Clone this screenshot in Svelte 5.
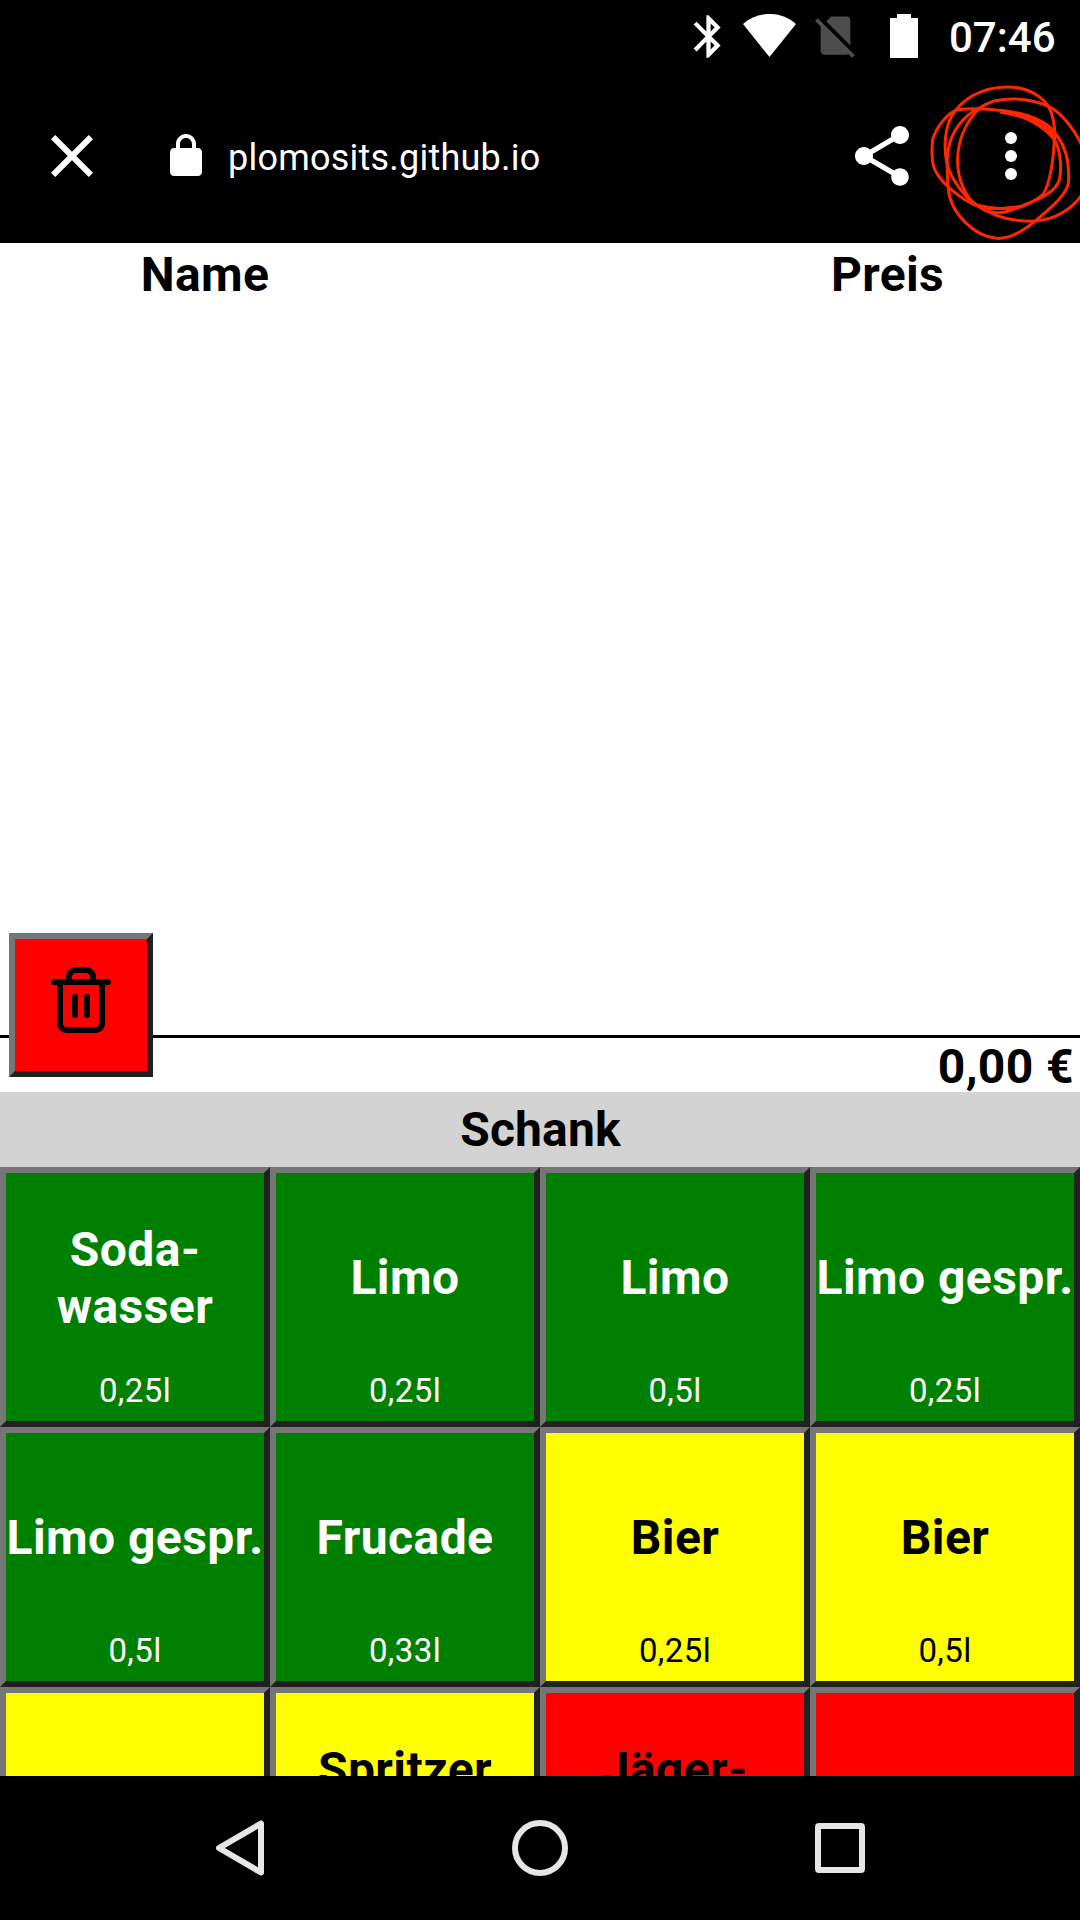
<script>
  const drinks = [
    { name: 'Soda-\nwasser', size: '0,25l', tone: 'green' },
    { name: 'Limo', size: '0,25l', tone: 'green' },
    { name: 'Limo', size: '0,5l', tone: 'green' },
    { name: 'Limo gespr.', size: '0,25l', tone: 'green' },
    { name: 'Limo gespr.', size: '0,5l', tone: 'green' },
    { name: 'Frucade', size: '0,33l', tone: 'green' },
    { name: 'Bier', size: '0,25l', tone: 'yellow' },
    { name: 'Bier', size: '0,5l', tone: 'yellow' },
    { name: '', size: '', tone: 'yellow' },
    { name: 'Spritzer\n\u00a0', size: '', tone: 'yellow' },
    { name: 'Jäger-\n\u00a0', size: '', tone: 'red' },
    { name: '', size: '', tone: 'red' }
  ];
</script>

<div class="screen">
  <header>
    <div class="status">
      <svg class="bt" viewBox="0 0 24 24"><path d="M17.71 7.71L12 2h-1v7.59L6.41 5 5 6.41 10.59 12 5 17.59 6.41 19 11 14.41V22h1l5.71-5.71-4.3-4.29 4.3-4.29zM13 5.83l1.88 1.88L13 9.59V5.83zm1.88 10.46L13 18.17v-3.76l1.88 1.88z" /></svg>
      <svg class="wifi" viewBox="0 0 53 43"><path d="M0 10C15-3.4 38-3.4 53 10L26.5 43z" /></svg>
      <svg class="sim" viewBox="0 0 24 24"><path d="M18.99 5c0-1.1-.6-2-1.7-2H10L7.66 5.34 19 16.68 18.99 5zM3.65 3.88L2.38 5.15 5 7.77V19c0 1.1.9 2 2 2h10.01c.35 0 .67-.1.96-.26l1.88 1.88 1.27-1.27L3.65 3.88z" /></svg>
      <svg class="battery" viewBox="0 0 28 44"><path d="M0 4h7V0h14v4h7v40H0z" /></svg>
      <span class="clock">07:46</span>
    </div>
    <div class="toolbar">
      <svg class="close" viewBox="0 0 24 24"><path d="M19 6.41L17.59 5 12 10.59 6.41 5 5 6.41 10.59 12 5 17.59 6.41 19 12 13.41 17.59 19 19 17.59 13.41 12z" /></svg>
      <svg class="lock" viewBox="0 0 24 24"><path d="M18 8h-1V6c0-2.76-2.24-5-5-5S7 3.24 7 6v2H6c-1.1 0-2 .9-2 2v10c0 1.1.9 2 2 2h12c1.1 0 2-.9 2-2V10c0-1.1-.9-2-2-2zM9 8V6c0-1.66 1.34-3 3-3s3 1.34 3 3v2H9z" /></svg>
      <span class="url">plomosits.github.io</span>
      <svg class="share" viewBox="0 0 24 24"><path d="M18 16.08c-.76 0-1.44.3-1.96.77L8.91 12.7c.05-.23.09-.46.09-.7s-.04-.47-.09-.7l7.05-4.11c.54.5 1.25.81 2.04.81 1.66 0 3-1.34 3-3s-1.34-3-3-3-3 1.34-3 3c0 .24.04.47.09.7L8.04 9.81C7.5 9.31 6.79 9 6 9c-1.66 0-3 1.34-3 3s1.34 3 3 3c.79 0 1.5-.31 2.04-.81l7.12 4.16c-.05.21-.08.43-.08.65 0 1.61 1.31 2.92 2.92 2.92s2.92-1.31 2.92-2.92-1.31-2.92-2.92-2.92z" /></svg>
      <svg class="more" viewBox="0 0 24 24"><circle cx="12" cy="6" r="2" /><circle cx="12" cy="12" r="2" /><circle cx="12" cy="18" r="2" /></svg>
    </div>
    <svg class="scribble" viewBox="0 0 465 495">
      <path d="M228 97C300 105 360 140 390 182C408 215 410 270 403 300C392 340 330 362 290 378C240 392 200 385 150 375C110 358 50 312 30 270C18 245 20 210 23 178C35 140 65 102 95 90C150 82 230 88 290 102C340 114 375 135 395 165C425 205 434 260 430 310C424 346 375 385 330 424C290 456 250 478 215 475C150 470 75 400 70 325C66 290 66 262 67 235C70 165 105 120 150 90" />
      <path d="M165 84C120 125 95 190 98 250C100 300 120 350 155 375C205 410 260 425 325 424C390 420 440 388 470 345M470 195C445 145 410 100 372 80C320 56 260 53 210 62C185 70 175 76 160 86" />
      <path d="M240 93C300 100 370 135 388 172M388 172C388 230 375 310 355 342C325 370 280 385 240 396C210 402 180 395 155 375C115 350 75 290 66 250C55 200 60 140 82 105C110 60 165 22 245 21C310 20 350 50 370 78C385 105 390 140 390 175M155 375C200 392 240 385 285 380" />
    </svg>
  </header>

  <main>
    <div class="heads"><span>Name</span><span>Preis</span></div>
    <section class="list"></section>
    <div class="total">
      0,00 €
      <button class="trash" aria-label="Löschen">
        <svg viewBox="0 0 24 24"><path d="M3 6h18M19 6v14c0 1-1 2-2 2H7c-1 0-2-1-2-2V6M8 6V4.500c0-1.500 1-2.500 2.500-2.500h3c1.500 0 2.500 1 2.500 2.500V6M10 11v6M14 11v6" /></svg>
      </button>
    </div>
    <h2>Schank</h2>
    <div class="grid">
      {#each drinks as drink}
        <button class="tile {drink.tone}">
          <span class="name">{drink.name}</span>
          <span class="size">{drink.size}</span>
        </button>
      {/each}
    </div>
  </main>

  <nav>
    <svg viewBox="0 0 60 60"><path d="M9 30L51 5.500v49z" /></svg>
    <svg viewBox="0 0 60 60"><circle cx="30" cy="30" r="25" /></svg>
    <svg viewBox="0 0 60 60"><rect x="8" y="8" width="44" height="44" rx="1" /></svg>
  </nav>
</div>

<style>
  :global(body) { margin: 0; background: #000; }
  .screen {
    width: 1080px;
    height: 1920px;
    display: flex;
    flex-direction: column;
    overflow: hidden;
    background: #fff;
    color: #000;
    font-family: Roboto, sans-serif;
  }
  svg { display: block; flex: none; }
  header {
    position: relative;
    height: 243px;
    flex: none;
    background: #000;
    color: #fff;
    fill: #fff;
  }
  .status {
    height: 72px;
    display: flex;
    align-items: flex-start;
    justify-content: flex-end;
    padding-right: 24px;
    box-sizing: border-box;
  }
  .bt { width: 51px; height: 51px; margin: 11px 9px 0 0; }
  .wifi { width: 53px; height: 43px; margin: 14px 14px 0 0; }
  .sim { width: 51px; height: 51px; margin: 10px 29px 0 0; fill: #4d4d4d; }
  .battery { width: 28px; height: 44px; margin-top: 14px; }
  .clock { width: 107px; margin: 13px 0 0 31px; font-size: 42px; line-height: 50px; font-weight: 500; white-space: nowrap; }
  .toolbar {
    height: 168px;
    display: flex;
    align-items: center;
    padding: 0 33px 0 36px;
  }
  .close, .share, .more { width: 72px; height: 72px; }
  .lock { width: 48px; height: 48px; margin-left: 54px; }
  .url { flex: 1; margin-left: 18px; padding-top: 4px; font-size: 36px; line-height: 42px; letter-spacing: .22px; }
  .more { margin-left: 57px; }
  .scribble {
    position: absolute;
    left: 925px;
    top: 80px;
    width: 155px;
    height: 165px;
    fill: none;
    stroke: #ff2600;
    stroke-width: 9;
    stroke-linecap: round;
  }
  main { height: 1533px; flex: none; overflow: hidden; }
  .heads {
    display: grid;
    grid-template-columns: 410px 1fr;
    padding-top: 3px;
    height: 57px;
    font-size: 48px;
    line-height: 57px;
    font-weight: 700;
    letter-spacing: .3px;
    text-align: center;
  }
  .heads span:last-child { padding-left: 285px; }
  .list { height: 732px; }
  .total {
    position: relative;
    height: 54px;
    border-top: 3px solid #000;
    padding-right: 6px;
    font-size: 48px;
    line-height: 57px;
    font-weight: 700;
    letter-spacing: .4px;
    text-align: right;
  }
  button {
    box-sizing: border-box;
    margin: 0;
    padding: 0;
    border: 6px solid;
    border-color: #767676 #212121 #212121 #767676;
    border-radius: 0;
    font-family: inherit;
  }
  .trash {
    position: absolute;
    left: 9px;
    top: -105px;
    width: 144px;
    height: 144px;
    padding-bottom: 10px;
    display: flex;
    align-items: center;
    justify-content: center;
    background: #f00;
  }
  .trash svg {
    width: 72px;
    height: 72px;
    fill: none;
    stroke: #000;
    stroke-width: 2;
    stroke-linecap: round;
    stroke-linejoin: round;
  }
  h2 {
    margin: 0;
    height: 75px;
    padding-left: 1px;
    background: #d3d3d3;
    font-size: 48px;
    line-height: 75px;
    font-weight: 700;
    letter-spacing: .15px;
    text-align: center;
  }
  .grid {
    display: grid;
    grid-template-columns: repeat(4, 270px);
    grid-auto-rows: 260px;
  }
  .tile { display: flex; flex-direction: column; align-items: center; }
  .name {
    height: 198px;
    padding-top: 11px;
    box-sizing: border-box;
    display: flex;
    align-items: center;
    font-size: 48px;
    line-height: 57px;
    font-weight: 700;
    letter-spacing: .45px;
    white-space: pre;
    text-align: center;
  }
  .size { font-size: 33px; line-height: 39px; letter-spacing: .4px; }
  .green { background: #008000; color: #fff; }
  .yellow { background: #ff0; color: #000; }
  .red { background: #f00; color: #000; }
  nav {
    height: 144px;
    flex: none;
    display: flex;
    align-items: center;
    justify-content: space-between;
    padding: 0 210px;
    background: #000;
    fill: none;
    stroke: #e6e6e6;
    stroke-width: 6;
    stroke-linejoin: round;
  }
  nav svg { width: 60px; height: 60px; }
</style>
